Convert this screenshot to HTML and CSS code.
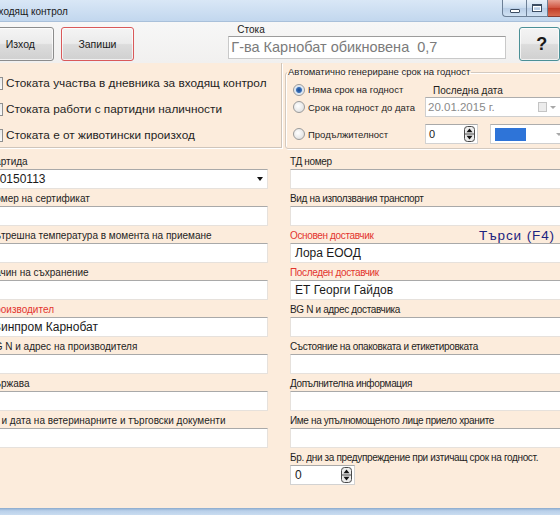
FILE: index.html
```html
<!DOCTYPE html>
<html lang="bg">
<head>
<meta charset="utf-8">
<title>Входящ контрол</title>
<link rel="stylesheet" href="styles.css">
</head>
<body>
<div class="window">
  <header class="titlebar">
    <span class="title">Входящ контрол</span>
    <div class="winbtns">
      <span class="wb wb-min"><span class="ico-min"></span></span>
      <span class="wb wb-max"><span class="ico-max"></span></span>
      <span class="wb wb-close"></span>
    </div>
  </header>

  <div class="toolbar">
    <button class="btn btn-exit">Изход</button>
    <button class="btn btn-save">Запиши</button>
    <div class="stock">
      <span class="stock-label">Стока</span>
      <div class="stock-input">Г-ва Карнобат обикновена  0,7</div>
    </div>
    <button class="btn btn-help">?</button>
  </div>

  <main class="form">
    <div class="top">
      <div class="checks">
        <label class="chk"><span class="box"></span>Стоката участва в дневника за входящ контрол</label>
        <label class="chk"><span class="box"></span>Стоката работи с партидни наличности</label>
        <label class="chk"><span class="box"></span>Стоката е от животински произход</label>
      </div>
      <fieldset class="auto">
        <legend>Автоматично генериране срок на годност</legend>
        <div class="auto-grid">
          <label class="radio"><span class="rb rb-on"></span>Няма срок на годност</label>
          <span class="last-date">Последна дата</span>
          <label class="radio"><span class="rb"></span>Срок на годност до дата</label>
          <div class="datebox">
            <span class="date-text">20.01.2015 г.</span>
            <span class="date-chk"></span>
            <span class="arrow-g"></span>
          </div>
          <label class="radio row3"><span class="rb"></span>Продължителност</label>
          <div class="dur row3">
            <div class="spin spin-small">
              <span class="spin-val">0</span>
              <svg class="spin-ico" width="11" height="16" viewBox="0 0 11 16"><rect x="0.5" y="0.5" width="10" height="15" rx="3" fill="#ececec" stroke="#4a4a4a"/><line x1="1" y1="8" x2="10" y2="8" stroke="#4a4a4a"/><path d="M2.5 6.2 L5.5 2.6 L8.5 6.2Z" fill="#111"/><path d="M2.5 9.8 L5.5 13.4 L8.5 9.8Z" fill="#111"/></svg>
            </div>
            <div class="combo">
              <span class="combo-sel"></span>
              <span class="arrow-g"></span>
            </div>
          </div>
        </div>
      </fieldset>
    </div>

    <div class="fields">
      <div class="col col-left">
        <div class="field">
          <div class="lbl">Партида</div>
          <div class="inp inp-combo"><span>20150113</span><span class="arrow-b"></span></div>
        </div>
        <div class="field">
          <div class="lbl">Номер на сертификат</div>
          <div class="inp"></div>
        </div>
        <div class="field">
          <div class="lbl">Вътрешна температура в момента на приемане</div>
          <div class="inp"></div>
        </div>
        <div class="field">
          <div class="lbl">Начин на съхранение</div>
          <div class="inp"></div>
        </div>
        <div class="field">
          <div class="lbl lbl-red">Производител</div>
          <div class="inp">Винпром Карнобат</div>
        </div>
        <div class="field">
          <div class="lbl">BG N и адрес на производителя</div>
          <div class="inp"></div>
        </div>
        <div class="field">
          <div class="lbl">Държава</div>
          <div class="inp"></div>
        </div>
        <div class="field">
          <div class="lbl">№ и дата на ветеринарните и търговски документи</div>
          <div class="inp"></div>
        </div>
      </div>

      <div class="col col-right">
        <div class="field">
          <div class="lbl">ТД номер</div>
          <div class="inp"></div>
        </div>
        <div class="field">
          <div class="lbl">Вид на използвания транспорт</div>
          <div class="inp"></div>
        </div>
        <div class="field">
          <div class="lbl lbl-row"><span class="lbl-red">Основен доставчик</span><span class="search">Търси (F4)</span></div>
          <div class="inp">Лора ЕООД</div>
        </div>
        <div class="field">
          <div class="lbl lbl-red">Последен доставчик</div>
          <div class="inp">ЕТ Георги Гайдов</div>
        </div>
        <div class="field">
          <div class="lbl">BG N и адрес доставчика</div>
          <div class="inp"></div>
        </div>
        <div class="field">
          <div class="lbl">Състояние на опаковката и етикетировката</div>
          <div class="inp"></div>
        </div>
        <div class="field">
          <div class="lbl">Допълнителна информация</div>
          <div class="inp"></div>
        </div>
        <div class="field">
          <div class="lbl">Име на упълномощеното лице приело храните</div>
          <div class="inp"></div>
        </div>
        <div class="field">
          <div class="lbl">Бр. дни за предупреждение при изтичащ срок на годност.</div>
          <div class="spin spin-days">
            <span class="spin-val">0</span>
            <svg class="spin-ico" width="11" height="16" viewBox="0 0 11 16"><rect x="0.5" y="0.5" width="10" height="15" rx="3" fill="#ececec" stroke="#4a4a4a"/><line x1="1" y1="8" x2="10" y2="8" stroke="#4a4a4a"/><path d="M2.5 6.2 L5.5 2.6 L8.5 6.2Z" fill="#111"/><path d="M2.5 9.8 L5.5 13.4 L8.5 9.8Z" fill="#111"/></svg>
          </div>
        </div>
      </div>
    </div>
  </main>

  <footer class="frame-bottom"></footer>
</div>
</body>
</html>
```

FILE: styles.css
```css
* { box-sizing: border-box; }

html, body {
  margin: 0;
  padding: 0;
}

body {
  width: 560px;
  height: 515px;
  overflow: hidden;
  background: #fcecdc;
  color: #1e1e1e;
  font-family: "Liberation Sans", Arial, sans-serif;
}

.window {
  display: flex;
  flex-direction: column;
  height: 515px;
}

/* ---------- title bar ---------- */
.titlebar {
  flex: none;
  height: 22px;
  display: flex;
  align-items: flex-start;
  background: linear-gradient(#d9e7f6, #c2d7ee);
  border-bottom: 1px solid #a9c0da;
}

.title {
  margin-left: -8px;
  margin-top: 5px;
  font-size: 10px;
  line-height: 14px;
  color: #1a1a1a;
}

.winbtns {
  margin-left: auto;
  display: flex;
  margin-right: -32px;
}

.wb {
  height: 17px;
  display: flex;
  align-items: center;
  justify-content: center;
  border: 1px solid #6c7f96;
  border-top: none;
  background: linear-gradient(#e9f1fa, #c9dbee 50%, #b8cde6 51%, #d0e1f3);
}

.wb-min {
  width: 24px;
  border-radius: 0 0 0 4px;
  border-right: none;
}

.wb-max {
  width: 22px;
}

.wb-close {
  width: 44px;
  border-left: none;
  border-color: #8a3a30;
  border-radius: 0 0 4px 0;
  background: linear-gradient(#e8a193, #d0533f 50%, #c13b26 51%, #d86a4f);
}

.ico-min {
  width: 10px;
  height: 4px;
  margin-top: 6px;
  background: #fff;
  border: 1px solid #3c4d63;
  border-radius: 1px;
}

.ico-max {
  width: 10px;
  height: 8px;
  background: transparent;
  border: 1px solid #3c4d63;
  border-top-width: 2px;
  box-shadow: inset 0 0 0 1px #fff;
}

/* ---------- toolbar ---------- */
.toolbar {
  flex: none;
  height: 41px;
  display: flex;
  align-items: flex-start;
  padding-top: 5px;
  background: linear-gradient(#f7f7f7, #f1f0ef);
}

.btn {
  height: 34px;
  padding: 0;
  border: 1px solid #8c8c8c;
  border-radius: 3px;
  background: linear-gradient(#f4f4f4 0%, #ebebeb 48%, #dcdcdc 52%, #d0d0d0 100%);
  box-shadow: inset 0 0 0 1px rgba(255,255,255,0.7);
  font-family: "Liberation Sans", Arial, sans-serif;
  font-size: 10.5px;
  color: #1a1a1a;
}

.btn-exit {
  margin-left: -13px;
  width: 76px;
}

.btn-save {
  margin-left: 7px;
  width: 84px;
  border-color: #d9595a;
}

.stock {
  margin-left: 94px;
  margin-top: -3px;
  display: flex;
  flex-direction: column;
}

.stock-label {
  height: 12px;
  line-height: 12px;
  font-size: 10px;
  margin-left: 9px;
  color: #222;
}

.stock-input {
  width: 278px;
  height: 23px;
  padding-left: 2px;
  background: #fff;
  border: 1px solid #c9c9c9;
  border-top-color: #9c9c9c;
  font-size: 14.5px;
  line-height: 21px;
  white-space: pre;
  color: #7b7b7b;
}

.btn-help {
  margin-left: 13px;
  width: 44px;
  text-align: left;
  padding-left: 16px;
  border-color: #4b9096;
  font-size: 18px;
  font-weight: bold;
}

/* ---------- form ---------- */
.form {
  flex: 1;
  display: flex;
  flex-direction: column;
  background: #fcecdc;
}

.top {
  flex: none;
  display: flex;
  height: 86px;
}

.checks {
  width: 294px;
  height: 85px;
  margin-left: -12px;
  padding-top: 7px;
  border-right: 1px solid #cfc5bb;
  border-bottom: 1px solid #cfc5bb;
  box-shadow: 1px 1px 0 #fff;
}

.chk {
  display: flex;
  align-items: center;
  height: 26px;
  font-size: 11.8px;
  color: #1e1e1e;
  white-space: nowrap;
}

.box {
  width: 13px;
  height: 13px;
  margin-left: 2px;
  margin-right: 3px;
  flex: none;
  border: 1px solid #8e8f8f;
  background: linear-gradient(135deg, #dcdcdc, #fafafa);
}

.auto {
  flex: 1;
  margin: 3px -10px 0 3px;
  padding: 0 0 0 7px;
  height: 83px;
  border: 1px solid #d3c9bf;
  border-radius: 3px;
  box-shadow: inset 1px 1px 0 #fff, 1px 1px 0 #fff;
  min-width: 0;
}

.auto legend {
  padding: 0 1px;
  margin-left: -6px;
  font-size: 9.5px;
  line-height: 12px;
  color: #1e1e1e;
  white-space: nowrap;
}

.auto-grid {
  display: grid;
  grid-template-columns: 132px 1fr;
  grid-template-rows: 15px 20px 27px;
  padding-top: 4px;
}

.radio {
  display: flex;
  align-items: center;
  font-size: 9.5px;
  color: #1e1e1e;
  white-space: nowrap;
}

.rb {
  width: 12px;
  height: 12px;
  margin-right: 3px;
  flex: none;
  border-radius: 50%;
  border: 1px solid #9a9a9a;
  background: radial-gradient(circle at 40% 40%, #ffffff, #d8d8d8);
}

.rb-on {
  background: radial-gradient(circle, #1d4d93 0, #3a70b8 2.5px, #d6e2ef 3.5px, #f4f4f4 6px);
}

.last-date {
  align-self: end;
  margin-left: 8px;
  font-size: 10px;
  line-height: 13px;
  color: #1e1e1e;
}

.datebox {
  height: 20px;
  width: 150px;
  display: flex;
  align-items: center;
  background: #fff;
  border: 1px solid #cfcfcf;
  border-top-color: #adadad;
}

.date-text {
  margin-left: 2px;
  font-size: 11.5px;
  color: #8a8a8a;
}

.date-chk {
  width: 9px;
  height: 10px;
  margin-left: 43px;
  border: 1px solid #c4c4c4;
  background: #ececec;
}

.arrow-g {
  width: 0;
  height: 0;
  margin-left: 3px;
  border-left: 3px solid transparent;
  border-right: 3px solid transparent;
  border-top: 3px solid #a8a8a8;
}

.row3 {
  align-self: end;
}

.radio.row3 {
  height: 20px;
}

.dur {
  display: flex;
  height: 20px;
}

.spin {
  height: 20px;
  display: flex;
  align-items: center;
  background: #fff;
  border: 1px solid #d2d2d2;
  border-top-color: #a9a9a9;
}

.spin-val {
  flex: 1;
  padding-left: 3px;
  font-size: 11px;
  color: #222;
}

.spin-ico {
  margin-right: 2px;
  flex: none;
}

.spin-small {
  width: 53px;
}

.combo {
  width: 80px;
  margin-left: 12px;
  height: 20px;
  display: flex;
  align-items: center;
  background: #fff;
  border: 1px solid #cfcfcf;
  border-top-color: #adadad;
}

.combo-sel {
  width: 31px;
  height: 13px;
  margin-left: 4px;
  background: #2e74d8;
}

.combo .arrow-g {
  margin-left: 30px;
}

/* ---------- fields ---------- */
.fields {
  display: grid;
  grid-template-columns: 280px 300px;
  column-gap: 22px;
  margin-left: -12px;
  padding-top: 6px;
}

.field {
  height: 37px;
}

.lbl {
  height: 14px;
  line-height: 14px;
  font-size: 10px;
  white-space: nowrap;
  color: #1e1e1e;
}

.col-right .lbl {
  font-size: 10px;
  letter-spacing: -0.35px;
}

.lbl-red {
  color: #e3352f;
}

.lbl-row {
  display: flex;
  justify-content: space-between;
}

.search {
  margin-right: 35px;
  font-size: 13.5px;
  letter-spacing: 0.9px;
  color: #1b2380;
}

.inp {
  height: 20px;
  padding-left: 4px;
  background: #fff;
  border: 1px solid #e6e1dc;
  border-top-color: #a9a9a9;
  font-size: 12px;
  line-height: 18px;
  color: #1a1a1a;
  white-space: nowrap;
}

.inp-combo {
  display: flex;
  align-items: center;
  justify-content: space-between;
  padding-right: 4px;
}

.arrow-b {
  width: 0;
  height: 0;
  border-left: 3px solid transparent;
  border-right: 3px solid transparent;
  border-top: 4px solid #111;
}

.spin-days {
  width: 65px;
}

.spin-days .spin-val {
  padding-left: 4px;
  font-size: 12px;
}

/* ---------- bottom frame ---------- */
.frame-bottom {
  flex: none;
  height: 7px;
  background: linear-gradient(#8aa9cc, #b9d0ea 40%, #c9dcf0);
}
```
